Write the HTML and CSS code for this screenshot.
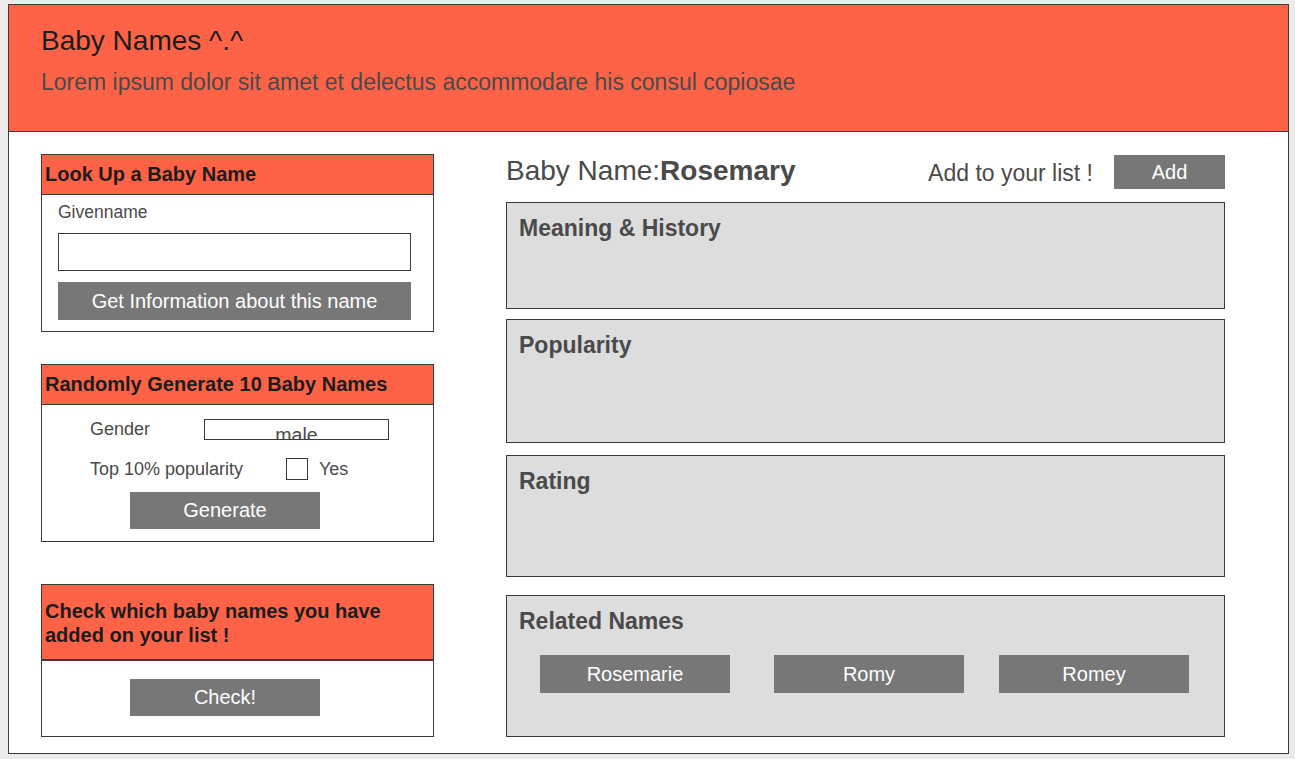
FILE: index.html
```html
<!DOCTYPE html>
<html lang="en">
<head>
<meta charset="utf-8">
<title>Baby Names</title>
<link rel="stylesheet" href="styles.css">
</head>
<body>
<div class="frame">
  <header class="top">
    <h1 class="title">Baby Names ^.^</h1>
    <p class="subtitle">Lorem ipsum dolor sit amet et delectus accommodare his consul copiosae</p>
  </header>
  <main class="content">
    <aside class="left">
      <section class="panel panel-lookup">
        <h2 class="panel-head">Look Up a Baby Name</h2>
        <div class="panel-body lookup-body">
          <label class="label label-given">Givenname</label>
          <div class="input"></div>
          <div class="btn btn-wide">Get Information about this name</div>
        </div>
      </section>
      <section class="panel panel-random">
        <h2 class="panel-head">Randomly Generate 10 Baby Names</h2>
        <div class="panel-body random-body">
          <div class="row row-gender">
            <span class="label label-gender">Gender</span>
            <div class="select"><span>male</span></div>
          </div>
          <div class="row row-top">
            <span class="label label-top">Top 10% popularity</span>
            <span class="checkbox"></span>
            <span class="label">Yes</span>
          </div>
          <div class="btn btn-mid">Generate</div>
        </div>
      </section>
      <section class="panel panel-check">
        <h2 class="panel-head panel-head-tall">Check which baby names you have added on your list !</h2>
        <div class="panel-body check-body">
          <div class="btn btn-mid">Check!</div>
        </div>
      </section>
    </aside>
    <section class="right">
      <div class="name-row">
        <div class="name-title">Baby Name:<b>Rosemary</b></div>
        <div class="add-group">
          <span class="add-text">Add to your list !</span>
          <div class="btn btn-add">Add</div>
        </div>
      </div>
      <div class="box box-meaning"><h3 class="box-head">Meaning &amp; History</h3></div>
      <div class="box box-pop"><h3 class="box-head">Popularity</h3></div>
      <div class="box box-rating"><h3 class="box-head">Rating</h3></div>
      <div class="box box-related">
        <h3 class="box-head">Related Names</h3>
        <div class="related">
          <div class="btn btn-rel">Rosemarie</div>
          <div class="btn btn-rel rel-2">Romy</div>
          <div class="btn btn-rel rel-3">Romey</div>
        </div>
      </div>
    </section>
  </main>
</div>
</body>
</html>
```

FILE: styles.css
```css
* { box-sizing: border-box; }
html, body { margin: 0; padding: 0; }
body {
  background: #ebebeb;
  font-family: "Liberation Sans", Arial, sans-serif;
  color: #444;
}
.frame {
  margin: 4px 0 0 8px;
  width: 1281px;
  height: 750px;
  border: 1px solid #3a3a3a;
  background: #fff;
  display: flex;
  flex-direction: column;
}
.top {
  background: #ff6347;
  height: 127px;
  border-bottom: 1px solid #3a3a3a;
  padding: 20px 0 0 32px;
}
.title {
  margin: 0;
  font-weight: normal;
  font-size: 28px;
  line-height: 32px;
  color: #1c1c1c;
}
.subtitle {
  margin: 12px 0 0 0;
  font-size: 23px;
  line-height: 26px;
  color: #4a4a4a;
}
.content {
  display: flex;
  padding: 22px 0 0 32px;
}
.left {
  width: 393px;
  display: flex;
  flex-direction: column;
}
.panel {
  border: 1px solid #3a3a3a;
  background: #fff;
}
.panel-random { margin-top: 32px; height: 178px; }
.panel-lookup { height: 178px; }
.panel-check { margin-top: 42px; height: 153px; }
.panel-head {
  margin: 0;
  background: #ff6347;
  border-bottom: 1px solid #3a3a3a;
  height: 40px;
  padding: 7px 0 0 3px;
  font-size: 20px;
  line-height: 24px;
  font-weight: bold;
  color: #1c1c1c;
}
.panel-head-tall {
  height: 76px;
  border-bottom-width: 2px;
  padding-top: 14px;
}
.label {
  font-size: 18px;
  line-height: 20px;
  color: #4a4a4a;
}
.label-given { font-size: 17.5px; }
.lookup-body {
  padding: 7px 22px 0 16px;
  display: flex;
  flex-direction: column;
}
.input {
  margin-top: 11px;
  height: 38px;
  border: 1px solid #3a3a3a;
  background: #fff;
}
.btn {
  background: #777;
  color: #fff;
  font-size: 20px;
  display: flex;
  align-items: center;
  justify-content: center;
}
.btn-wide {
  margin-top: 11px;
  height: 38px;
}
.random-body {
  padding: 14px 0 0 48px;
}
.row {
  display: flex;
  align-items: center;
}
.label-gender { width: 114px; margin-top: -1px; }
.select {
  width: 185px;
  height: 21px;
  border: 1px solid #3a3a3a;
  overflow: hidden;
  text-align: center;
  font-size: 19.5px;
  line-height: 19px;
  padding-top: 6px;
  color: #4a4a4a;
}
.row-top { margin-top: 18px; }
.label-top { width: 196px; }
.checkbox {
  width: 22px;
  height: 22px;
  border: 1px solid #3a3a3a;
  margin-right: 11px;
}
.btn-mid {
  width: 190px;
  height: 37px;
  margin-left: 40px;
  margin-top: 12px;
}
.check-body {
  padding: 18px 0 0 88px;
}
.check-body .btn-mid { margin: 0; }
.right {
  width: 719px;
  margin-left: 72px;
  display: flex;
  flex-direction: column;
}
.name-row {
  display: flex;
  justify-content: space-between;
  align-items: center;
  height: 35px;
  padding-top: 1px;
}
.name-title {
  font-size: 28px;
  color: #4a4a4a;
  margin-top: -3px;
}
.name-title b { font-weight: bold; }
.add-group {
  display: flex;
  align-items: center;
}
.add-text {
  font-size: 23px;
  color: #4a4a4a;
  margin-right: 21px;
  margin-top: 2px;
}
.btn-add {
  width: 111px;
  height: 34px;
}
.box {
  background: #dddddd;
  border: 1px solid #3a3a3a;
  padding: 11px 12px 0 12px;
}
.box-head {
  margin: 0;
  font-size: 23px;
  line-height: 28px;
  font-weight: bold;
  color: #4a4a4a;
}
.box-meaning { margin-top: 13px; height: 107px; }
.box-pop { margin-top: 10px; height: 124px; }
.box-rating { margin-top: 12px; height: 122px; }
.box-related { margin-top: 18px; height: 142px; padding-top: 11px; }
.related {
  display: flex;
  margin-top: 20px;
  padding-left: 21px;
}
.btn-rel { width: 190px; height: 38px; }
.rel-2 { margin-left: 44px; }
.rel-3 { margin-left: 35px; }
```
